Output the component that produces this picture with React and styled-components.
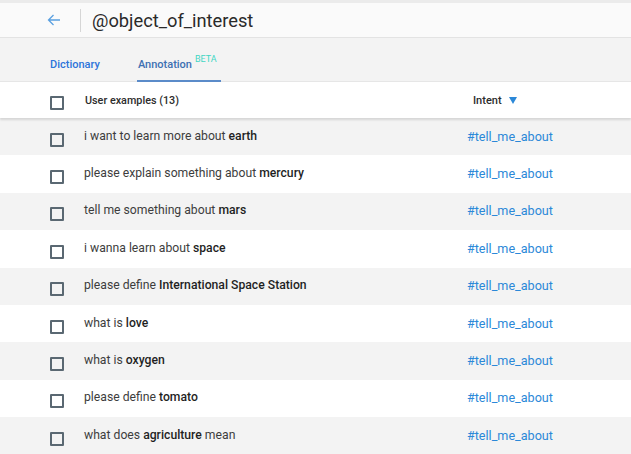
import React from 'react'
import styled, { createGlobalStyle } from 'styled-components'

const GlobalStyle = createGlobalStyle`
  body {
    margin: 0;
    background: #f3f3f3;
    font-family: Roboto, "Noto Sans", sans-serif;
    color: #3d3d3d;
  }
`;

const examples = [
  ['i want to learn more about ', 'earth', ''],
  ['please explain something about ', 'mercury', ''],
  ['tell me something about ', 'mars', ''],
  ['i wanna learn about ', 'space', ''],
  ['please define ', 'International Space Station', ''],
  ['what is ', 'love', ''],
  ['what is ', 'oxygen', ''],
  ['please define ', 'tomato', ''],
  ['what does ', 'agriculture', ' mean'],
];

const App = () => {
  return (
    <Page>
      <GlobalStyle />
      <TopStrip />
      <Header>
        <BackButton>
          <svg width="14" height="12" viewBox="0 0 14 12" fill="none" stroke="#5aa0e0" strokeWidth="1.3">
            <path d="M13 6H1.5M6.5 1L1.5 6l5 5" />
          </svg>
        </BackButton>
        <Divider />
        <Title>@object_of_interest</Title>
      </Header>
      <Tabs>
        <Tab>Dictionary</Tab>
        <Tab active>
          Annotation<Beta>BETA</Beta>
        </Tab>
      </Tabs>
      <TableHead>
        <CheckCell>
          <Checkbox />
        </CheckCell>
        <HeadLabel>User examples (13)</HeadLabel>
        <IntentHead>
          Intent
          <svg width="8" height="7" viewBox="0 0 8 7">
            <path d="M0 0h8L4 7z" fill="#2b88d8" />
          </svg>
        </IntentHead>
      </TableHead>
      <Rows>
        {examples.map(([a, b, c], i) => (
          <Row key={i} odd={i % 2 === 0}>
            <CheckCell>
              <Checkbox />
            </CheckCell>
            <Text>
              {a}
              <b>{b}</b>
              {c}
            </Text>
            <Intent>#tell_me_about</Intent>
          </Row>
        ))}
      </Rows>
    </Page>
  )
}

const Page = styled.div`
  width: 631px;
  height: 454px;
  overflow: hidden;
  background: #f3f3f3;
`;
const TopStrip = styled.div`
  height: 3px;
  background: #ebebeb;
`;
const Header = styled.div`
  display: flex;
  align-items: center;
  height: 34px;
  background: #fafafa;
  border-bottom: 1px solid #e3e3e3;
`;
const BackButton = styled.div`
  display: flex;
  align-items: center;
  margin-left: 47px;
  width: 14px;
`;
const Divider = styled.div`
  width: 1px;
  height: 23px;
  background: #d6d6d6;
  margin: 0 11px 0 19px;
`;
const Title = styled.h1`
  margin: 0;
  font-size: 18.3px;
  font-weight: 400;
  color: #2a2a2a;
`;
const Tabs = styled.div`
  display: flex;
  align-items: flex-end;
  height: 43px;
  padding-left: 49px;
  gap: 36px;
  background: #f3f3f3;
  border-bottom: 1px solid #e6e6e6;
`;
const Tab = styled.div`
  font-size: 11px;
  font-weight: 500;
  color: ${p => (p.active ? '#3d70b2' : '#2d74da')};
  padding: 0 ${p => (p.active ? '4px' : '1px')} 9px 1px;
  border-bottom: 2px solid ${p => (p.active ? '#5b8bc9' : 'transparent')};
  margin-bottom: -1px;
`;
const Beta = styled.sup`
  font-size: 9px;
  font-weight: 400;
  color: #41d6c3;
  margin-left: 3px;
  vertical-align: 6px;
  line-height: 0;
`;
const TableHead = styled.div`
  position: relative;
  z-index: 1;
  display: flex;
  align-items: center;
  height: 36px;
  background: #fff;
  box-shadow: 0 2px 2px rgba(0, 0, 0, 0.12);
`;
const CheckCell = styled.div`
  width: 84px;
  flex: none;
  display: flex;
  padding-left: 50px;
  padding-top: 6px;
  box-sizing: border-box;
`;
const Checkbox = styled.span`
  display: block;
  width: 10px;
  height: 10px;
  border: 2px solid #5a6872;
  border-radius: 1px;
`;
const HeadLabel = styled.div`
  flex: 1;
  font-size: 10.8px;
  font-weight: 500;
  color: #2c2c2c;
  padding-left: 1px;
`;
const IntentHead = styled.div`
  width: 158px;
  display: flex;
  align-items: center;
  gap: 7px;
  font-size: 11px;
  font-weight: 500;
  color: #2c2c2c;
`;
const Rows = styled.div`
  display: flex;
  flex-direction: column;
`;
const Row = styled.div`
  display: flex;
  align-items: center;
  height: 37.4px;
  background: ${p => (p.odd ? '#f3f3f3' : '#fff')};
`;
const Text = styled.div`
  flex: 1;
  font-size: 12.2px;
  color: #3d3d3d;
  padding-bottom: 2px;
  b {
    font-weight: 500;
    color: #1f1f1f;
  }
`;
const Intent = styled.div`
  width: 164px;
  font-size: 12.6px;
  color: #2b88d8;
  padding-bottom: 1px;
`;

export default App
